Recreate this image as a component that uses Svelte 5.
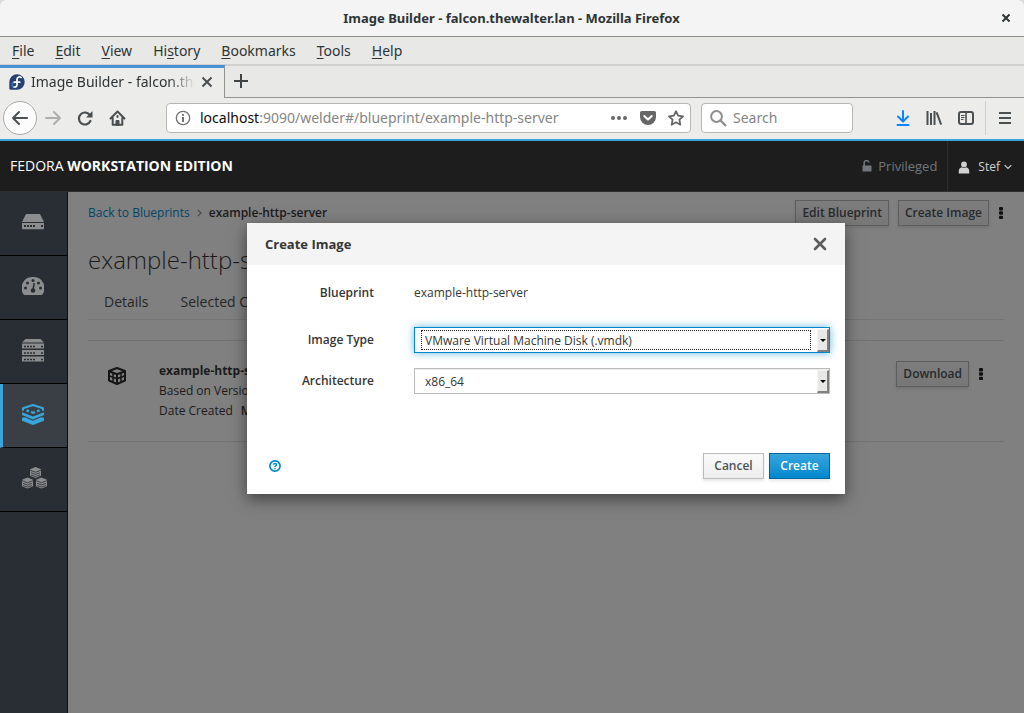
<script>
  const menus = [
    ['', 'F', 'ile'],
    ['', 'E', 'dit'],
    ['', 'V', 'iew'],
    ['Hi', 's', 'tory'],
    ['', 'B', 'ookmarks'],
    ['', 'T', 'ools'],
    ['', 'H', 'elp']
  ];
  const sections = ['System', 'Dashboard', 'Servers', 'Image Builder', 'Clusters'];
  let imageType = $state('vmdk');
  let arch = $state('x86_64');
</script>

{#snippet kebab()}
  <svg width="6" height="14" viewBox="0 0 6 14" fill="#101010"><rect x="1" y="1" width="4" height="3.4" rx="1" /><rect x="1" y="5.3" width="4" height="3.4" rx="1" /><rect x="1" y="9.7" width="4" height="3.4" rx="1" /></svg>
{/snippet}

<div class="window">
  <header class="titlebar">
    <span class="title">Image Builder - falcon.thewalter.lan - Mozilla Firefox</span>
    <button class="bare close" aria-label="Close window">
      <svg width="10" height="10" viewBox="0 0 10 10" stroke="#2e3436" stroke-width="2"><path d="M1.5 1.5l7 7M8.5 1.5l-7 7" /></svg>
    </button>
  </header>

  <nav class="menubar">
    {#each menus as [pre, key, post]}
      <button class="bare">{pre}<u>{key}</u>{post}</button>
    {/each}
  </nav>

  <div class="tabs">
    <div class="tab">
      <svg width="16" height="16" viewBox="0 0 16 16"><path d="M8 .3a7.7 7.7 0 1 1 0 15.4H1.6A1.3 1.3 0 0 1 .3 14.4V8A7.7 7.7 0 0 1 8 .3z" fill="#294172" /><path d="M7.4 8.2H5.6a2.5 2.5 0 1 0 2.5 2.5V5.400" fill="none" stroke="#3c6eb4" stroke-width="1.6" /><path d="M12.200 3.400C10 2.300 8 3.200 8 5.500v5.200c0 1.700-1.300 2.400-2.800 2.300M5.200 8.200h5.600" fill="none" stroke="#fff" stroke-width="1.700" stroke-linecap="round" /></svg>
      <span class="tabtext">Image Builder - falcon.thewalter.lan</span>
      <button class="bare" aria-label="Close tab">
        <svg width="12" height="12" viewBox="0 0 12 12" stroke="#4a4f51" stroke-width="2"><path d="M1.500 1.500l9 9M10.500 1.500l-9 9" /></svg>
      </button>
    </div>
    <div class="strip">
      <button class="bare" aria-label="New tab">
        <svg width="14" height="14" viewBox="0 0 14 14" stroke="#3f4547" stroke-width="2"><path d="M7 0v14M0 7h14" /></svg>
      </button>
    </div>
  </div>

  <div class="navbar">
    <button class="bare back" aria-label="Back">
      <svg width="18" height="16" viewBox="0 0 18 16" fill="none" stroke="#4a4f51" stroke-width="2" stroke-linecap="round" stroke-linejoin="round"><path d="M16 8H2M8 2L2 8l6 6" /></svg>
    </button>
    <button class="bare tool" aria-label="Forward">
      <svg width="18" height="16" viewBox="0 0 18 16" fill="none" stroke="#adafad" stroke-width="2" stroke-linecap="round" stroke-linejoin="round"><path d="M2 8h14M10 2l6 6-6 6" /></svg>
    </button>
    <button class="bare tool" aria-label="Reload">
      <svg width="16" height="16" viewBox="0 0 16 16" fill="none" stroke="#4a4f51" stroke-width="2.200"><path d="M13.200 5.600A6 6 0 1 0 13.400 11" stroke-linecap="round" /><path d="M15.500 1v6.500H9z" fill="#4a4f51" stroke="none" /></svg>
    </button>
    <button class="bare tool" aria-label="Home">
      <svg width="17" height="16" viewBox="0 0 17 16" fill="none" stroke="#4a4f51" stroke-width="2" stroke-linecap="round" stroke-linejoin="round"><path d="M1.500 8.500l7-7 7 7M3.700 8v6.800h9.600V8" /><path d="M7 15v-4.500h3V15z" fill="#4a4f51" stroke-width="1" /><path d="M8.500 6v1" /></svg>
    </button>

    <div class="urlbar">
      <svg width="16" height="16" viewBox="0 0 16 16"><circle cx="8" cy="8" r="6.700" fill="none" stroke="#737373" stroke-width="1.300" /><path d="M8 7v5M8 4v1.800" stroke="#737373" stroke-width="2" /></svg>
      <span class="url"><b>localhost</b>:9090/welder#/blueprint/example-http-server</span>
      <button class="bare" aria-label="Page actions"><svg width="18" height="16" viewBox="0 0 18 16" fill="#666"><circle cx="3" cy="8" r="2" /><circle cx="9" cy="8" r="2" /><circle cx="15" cy="8" r="2" /></svg></button>
      <button class="bare" aria-label="Save to Pocket"><svg width="16" height="16" viewBox="0 0 16 16"><path d="M1.800 1h12.400A1.800 1.800 0 0 1 16 2.800V7a8 8 0 0 1-16 0V2.800A1.800 1.800 0 0 1 1.800 1z" fill="#666" /><path d="M4.200 6l3.800 3.600L11.800 6" fill="none" stroke="#fff" stroke-width="2" stroke-linecap="round" stroke-linejoin="round" /></svg></button>
      <button class="bare" aria-label="Bookmark"><svg width="16" height="16" viewBox="0 0 16 16" fill="none" stroke="#666" stroke-width="1.800" stroke-linejoin="round"><path d="M8 1.200l2.100 4.500 4.900.6-3.600 3.400.9 5L8 12.300l-4.300 2.400.9-5L1 6.300l4.900-.6z" /></svg></button>
    </div>

    <div class="search">
      <svg width="17" height="17" viewBox="0 0 17 17" fill="none" stroke="#8f8f8f" stroke-width="2"><circle cx="6.500" cy="6.500" r="5.400" /><path d="M10.500 10.500l5.500 5.500" stroke-width="2.400" /></svg>
      <input type="text" placeholder="Search" aria-label="Search" />
    </div>

    <div class="tools">
      <button class="bare" aria-label="Downloads"><svg width="14" height="16" viewBox="0 0 14 16" fill="none" stroke="#0a84ff" stroke-width="2" stroke-linecap="round" stroke-linejoin="round"><path d="M7 1v10M2 6.500l5 5 5-5M1.500 15h11" /></svg></button>
      <button class="bare" aria-label="Library"><svg width="16" height="16" viewBox="0 0 16 16" stroke="#4a4f51" stroke-width="2"><path d="M1.500 1v14M5 3v12M8.500 1v14M10.600 2.400l4.600 12.200" /></svg></button>
      <button class="bare" aria-label="Sidebars"><svg width="16" height="14" viewBox="0 0 16 14" fill="none" stroke="#4a4f51"><rect x="1" y="1" width="14" height="12" rx="2" stroke-width="2" /><path d="M8 1v12" stroke-width="1.600" /><path d="M3 4.500h3.500M3 6.500h3.500M3 8.500h2.500" /></svg></button>
      <span class="sep"></span>
      <button class="bare" aria-label="Open menu"><svg width="12" height="14" viewBox="0 0 12 14" stroke="#4a4f51" stroke-width="2"><path d="M0 2h12M0 7h12M0 12h12" /></svg></button>
    </div>
  </div>

  <header class="masthead">
    <span class="brand">FEDORA <b>WORKSTATION EDITION</b></span>
    <span class="privileged"><svg width="10" height="12" viewBox="0 0 10 12"><path d="M2.200 6V3.200a2.300 2.300 0 0 1 4.600-.7" fill="none" stroke="#72767b" stroke-width="1.500" /><rect x=".5" y="5.500" width="9" height="6" rx=".6" fill="#72767b" /></svg>Privileged</span>
    <button class="bare user"><svg width="12" height="13" viewBox="0 0 12 13" fill="#d1d1d1"><circle cx="6" cy="3.400" r="2.900" /><path d="M.8 12.500V10c0-2 1.400-3.400 3-3.700.6.500 1.300.8 2.200.8s1.600-.3 2.200-.8c1.600.3 3 1.700 3 3.700v2.500z" /></svg><span>Stef</span><svg class="caret" width="8" height="6" viewBox="0 0 8 6" fill="none" stroke="#d1d1d1" stroke-width="1.200"><path d="M.7 1.200L4 4.500l3.300-3.300" /></svg></button>
  </header>

  <div class="page">
    <nav class="sidebar">
      {#each sections as name, i}
        <a href="#{i}" class:active={i === 3} aria-label={name}>
          {#if i === 0}
            <svg width="22" height="16" viewBox="0 0 22 16" fill="#8b8d8f"><path d="M4 0h14l4 8H0z" /><path d="M0 9h22v5.500a.8.800 0 0 1-.8.800H.8a.8.800 0 0 1-.8-.8z" /><path d="M2 12h2m1 0h2m1 0h2m1 0h2m6 0h2" stroke="#292e34" stroke-width="2" /></svg>
          {:else if i === 1}
            <svg width="22" height="18" viewBox="0 0 22 18" fill="#8b8d8f"><path d="M11 0a11 11 0 0 1 9.500 17.300 1 1 0 0 1-.9.700H2.400a1 1 0 0 1-.9-.7A11 11 0 0 1 11 0z" /><g fill="#292e34"><circle cx="3.500" cy="11" r="1.500" /><circle cx="5.500" cy="6" r="1.500" /><circle cx="11" cy="3.500" r="1.500" /><circle cx="16.500" cy="6" r="1.500" /><circle cx="18.500" cy="11" r="1.500" /><circle cx="11" cy="13.500" r="2.300" /></g><path d="M11 13l1.200-7" stroke="#292e34" stroke-width="1.500" /></svg>
          {:else if i === 2}
            <svg width="22" height="23" viewBox="0 0 22 23" fill="#8b8d8f"><path d="M3.500 0h15L22 3.600H0zM0 4.500h22v5H0zM0 11h22v5H0zM0 17.500h22v5H0z" /><path d="M2 7.500h11m6 0h2M2 14h11m6 0h2M2 20.500h11m6 0h2" stroke="#292e34" stroke-width="1.500" stroke-dasharray="2 1" /></svg>
          {:else if i === 3}
            <svg width="22" height="21" viewBox="0 0 22 21" fill="none" stroke="#39a5dc" stroke-width="2"><path d="M1 6.800V4.200L11 1l10 3.200v2.600" stroke-linejoin="round" /><path d="M4.500 6.400l2.500 1M9 8l2 .8 2-.8M15 7.400l2.500-1" stroke-width="2.400" /><path d="M0 8.200l11 4.200 11-4.200v2.900l-11 4.300L0 11.100z" fill="#39a5dc" stroke="none" /><path d="M0 13.800l3-.6 8 3.500 8-3.500 3 .6v2.900L11 21 0 16.700z" fill="#39a5dc" stroke="none" /></svg>
          {:else}
            <svg width="26" height="22" viewBox="0 0 26 22"><defs><g id="stack"><path d="M0 2.200L5.500 0 11 2.200v6.600L5.500 11 0 8.800z" fill="#8b8d8f" /><path d="M0 3.200l5.500 2 5.500-2M1 5.800l4.500 1.600L10 5.800M1 8l4.500 1.500L10 8" fill="none" stroke="#292e34" stroke-width=".8" /></g></defs><use href="#stack" x="8" /><use href="#stack" y="10.500" /><use href="#stack" x="14" y="10.500" /></svg>
          {/if}
        </a>
      {/each}
    </nav>

    <main>
      <div class="top">
        <div class="crumbs"><a href="#blueprints">Back to Blueprints</a><svg width="5" height="8" viewBox="0 0 5 8" fill="none" stroke="#484848" stroke-width="1.200"><path d="M.8.800L4 4 .8 7.200" /></svg><span>example-http-server</span></div>
        <div class="actions"><button class="dim">Edit Blueprint</button><button class="dim">Create Image</button><button class="bare" aria-label="More actions">{@render kebab()}</button></div>
      </div>
      <h1>example-http-server</h1>
      <div class="subtabs"><a href="#details">Details</a><a href="#selected">Selected Components</a></div>
      <div class="row">
        <svg width="18" height="18" viewBox="0 0 18 18" fill="none" stroke="#151515" stroke-width="2" stroke-linejoin="round"><path d="M1 4l8-3 8 3v9.500L9 17l-8-3.500z" /><path d="M1 4.200l8 3 8-3M9 7v10" /><path d="M1 8.700l8 3 8-3M5 5.800v9M13 5.800v9" stroke-width="1.500" /></svg>
        <div class="info">
          <strong>example-http-server</strong>
          <span>Based on Version 0.0.1</span>
          <span>Date Created <b>May 2018</b></span>
        </div>
        <div class="rowactions"><button class="dim">Download</button><button class="bare" aria-label="Image actions">{@render kebab()}</button></div>
      </div>

      <div class="overlay">
        <div class="modal" role="dialog" aria-labelledby="dialog-title">
          <div class="head">
            <h2 id="dialog-title">Create Image</h2>
            <button class="bare" aria-label="Close"><svg width="14" height="14" viewBox="0 0 14 14" stroke="#5c5c5c" stroke-width="2.600" stroke-linecap="round"><path d="M2 2l10 10M12 2L2 12" /></svg></button>
          </div>
          <form class="fields" onsubmit={(e) => e.preventDefault()}>
            <span class="label first">Blueprint</span>
            <span class="first">example-http-server</span>
            <label class="label" for="image-type">Image Type</label>
            <div class="select focused">
              <select id="image-type" bind:value={imageType}><option value="vmdk">VMware Virtual Machine Disk (.vmdk)</option></select>
              <span class="arrow"></span>
            </div>
            <label class="label" for="arch">Architecture</label>
            <div class="select">
              <select id="arch" bind:value={arch}><option value="x86_64">x86_64</option></select>
              <span class="arrow"></span>
            </div>
          </form>
          <div class="foot">
            <button class="bare help" aria-label="Help"><svg width="12" height="12" viewBox="0 0 12 12" fill="none" stroke="#0088ce"><circle cx="6" cy="6" r="5.100" stroke-width="1.700" /><path d="M4.400 4.800C4.500 3 7.600 3 7.500 4.800 7.400 5.700 6 5.700 6 7M6 8v1.300" stroke-width="1.400" /></svg></button>
            <button class="btn">Cancel</button>
            <button class="btn primary">Create</button>
          </div>
        </div>
      </div>
    </main>
  </div>
</div>

<style>
  :global(body) { margin: 0; background: #d8d8d6; }
  .window, .window :global(*) { box-sizing: border-box; }
  .window { min-height: 100vh; display: flex; flex-direction: column; font: 12px/20px "Open Sans", "Noto Sans", sans-serif; color: #363636; overflow: hidden; border-radius: 6px 6px 0 0; }
  button, input, select { font: inherit; color: inherit; }
  .bare { border: 0; background: none; padding: 0; display: flex; align-items: center; justify-content: center; }
  svg { display: block; flex: none; }
  a { text-decoration: none; color: inherit; }

  .titlebar, .menubar, .tabs, .navbar { font-family: "Noto Sans", sans-serif; font-size: 14px; color: #2e3436; }
  .titlebar { height: 37px; background: #f4f4f4; border-bottom: 1px solid #8f908d; display: grid; grid-template-columns: 1fr auto 1fr; align-items: center; padding: 0 13px 0 12px; }
  .title { grid-column: 2; font-weight: 700; font-size: 13px; }
  .close { justify-self: end; }
  .menubar { height: 28px; background: #e8e8e7; display: flex; align-items: center; padding: 0 12px; gap: 21px; border-bottom: 1px solid #d0d0ce; }
  u { text-underline-offset: 2px; }
  .menubar button { display: block; }
  .tabs { height: 33px; display: flex; background: #e8e8e7; }
  .tab { width: 225px; flex: none; border-top: 3px solid #4a90d9; border-right: 1px solid #929490; background: #ececeb; display: flex; align-items: center; padding: 0 11px 2px 9px; gap: 6px; }
  .tabtext { flex: 1; overflow: hidden; white-space: nowrap; -webkit-mask-image: linear-gradient(to right, #000 84%, transparent); mask-image: linear-gradient(to right, #000 84%, transparent); }
  .strip { flex: 1; display: flex; align-items: center; border-bottom: 1px solid #929490; border-top: 1px solid #d0d0ce; padding: 0 0 2px 9px; }
  .navbar { height: 43px; background: #ececeb; border-bottom: 2px solid #39a5dc; display: flex; align-items: center; padding: 0 13px 1px 3px; }
  .back { width: 34px; height: 34px; border: 1px solid #aaa; border-radius: 50%; background: #fcfcfc; }
  .tool { width: 32px; height: 32px; }
  .urlbar { height: 30px; flex: 1; margin-left: 33px; border: 1px solid #b6b6b3; border-radius: 4px; background: #fff; display: flex; align-items: center; gap: 12px; padding: 0 6px 0 8px; }
  .url { flex: 1; color: #858585; margin-left: -3px; white-space: nowrap; }
  .url b { color: #0c0c0d; font-weight: 400; }
  .search { width: 152px; height: 30px; margin-left: 10px; border: 1px solid #b6b6b3; border-radius: 4px; background: #fff; display: flex; align-items: center; padding: 0 8px; gap: 6px; }
  .search input { border: 0; outline: 0; padding: 0; min-width: 0; width: 100%; background: none; }
  .search input::placeholder { color: #858585; opacity: 1; }
  .tools { display: flex; align-items: center; gap: 16px; margin-left: 43px; }
  .sep { width: 1px; height: 34px; background: #cfcfcd; margin: 0 -3px 0 -5px; }

  .masthead { height: 51px; background: #1d1d1d; border-bottom: 1px solid #303030; display: flex; align-items: center; color: #fff; padding-left: 10px; font-size: 14px; }
  .brand { flex: 1; }
  .privileged { display: flex; align-items: center; gap: 6px; color: #72767b; font-size: 13px; padding-right: 10px; }
  .user { align-self: stretch; border-left: 1px solid #2e2e2e; color: #d1d1d1; padding: 2px 12px 0 10px; font-size: 12px; }
  .user span { margin: 0 4px 0 8px; }

  .page { flex: 1; display: flex; }
  .sidebar { width: 68px; flex: none; background: #292e34; border-right: 1px solid #0c0e10; }
  .sidebar a { height: 64px; border-bottom: 1px solid #000; display: flex; align-items: center; padding: 0 0 3px 22px; }
  .sidebar a.active { background: #393f44; border-left: 3px solid #39a5dc; padding-left: 19px; }

  main { flex: 1; min-width: 0; position: relative; background: #808080; color: #1b1b1b; padding: 8px 20px 0; }
  .top { display: flex; justify-content: space-between; align-items: flex-start; }
  .crumbs { display: flex; align-items: center; gap: 7px; height: 26px; }
  .crumbs a { color: #004467; }
  .crumbs span { font-weight: 600; }
  .actions, .rowactions { display: flex; gap: 9px; align-items: center; }
  .dim { height: 26px; padding: 0 6px; border: 1px solid #5d5d5d; background: linear-gradient(#7d7d7d, #777); box-shadow: 0 2px 3px rgba(0, 0, 0, .1); color: #272a2d; font-weight: 600; white-space: nowrap; }
  h1 { margin: 18px 0 0; font-size: 24px; line-height: 32px; font-weight: 300; }
  .subtabs { display: flex; gap: 32px; padding: 0 16px 7px; height: 44px; align-items: flex-end; font-size: 14px; border-bottom: 1px solid #747474; color: #262626; }
  .row { margin-top: 20px; border-top: 1px solid #727272; border-bottom: 1px solid #727272; padding: 20px; display: flex; align-items: flex-start; }
  .row > svg { margin-top: 6px; }
  .info { display: flex; flex-direction: column; margin-left: 33px; flex: 1; }
  .info b { font-weight: 600; margin-left: 5px; }

  .overlay { position: absolute; inset: 0; padding: 31px 20px; overflow: hidden; }
  .modal { max-width: 598px; margin: 0 auto; background: #fff; color: #363636; box-shadow: 0 5px 15px rgba(0, 0, 0, .5); }
  .head { height: 42px; background: #f4f4f4; display: flex; align-items: center; justify-content: space-between; padding: 0 18px 1px; }
  h2 { margin: 0; font-size: 13px; font-weight: 700; }
  .fields { display: grid; grid-template-columns: 109px 1fr; column-gap: 40px; row-gap: 15px; line-height: 26px; padding: 15px 15px 59px 18px; }
  .label { text-align: right; font-weight: 600; }
  .first { padding-bottom: 6px; }
  .select { position: relative; height: 26px; }
  select { appearance: none; width: 100%; height: 26px; border: 1px solid #bbb; border-radius: 0; background: #fff; box-shadow: inset 0 1px 1px rgba(0, 0, 0, .075); padding: 0 20px 2px 10px; outline: 0; display: block; }
  .focused select { border-color: #0088ce; box-shadow: 0 0 8px rgba(0, 136, 206, .6); }
  .focused::after { content: ""; position: absolute; inset: 3px 19px 3px 7px; border: 1px dotted #222; pointer-events: none; }
  .arrow { position: absolute; top: 2px; right: 1px; bottom: 1px; width: 12px; background: #e8e8e7; border: 2px solid; border-color: #f4f4f4 #808080 #808080 #f4f4f4; border-width: 1px 2px 2px 1px; pointer-events: none; }
  .arrow::after { content: ""; position: absolute; left: 2px; top: 9px; border: 3px solid transparent; border-top-color: #000; border-bottom: 0; }
  .foot { display: flex; align-items: center; gap: 5px; padding: 0 15px 15px 22px; }
  .help { margin-right: auto; }
  .btn { height: 26px; min-width: 61px; padding: 0 10px; border: 1px solid #bbb; background: linear-gradient(#fafafa, #ededed); box-shadow: 0 2px 3px rgba(3, 3, 3, .1); color: #4d5258; font-weight: 600; }
  .primary { border-color: #00659c; background: linear-gradient(#39a5dc, #0088ce); color: #fff; }
</style>
